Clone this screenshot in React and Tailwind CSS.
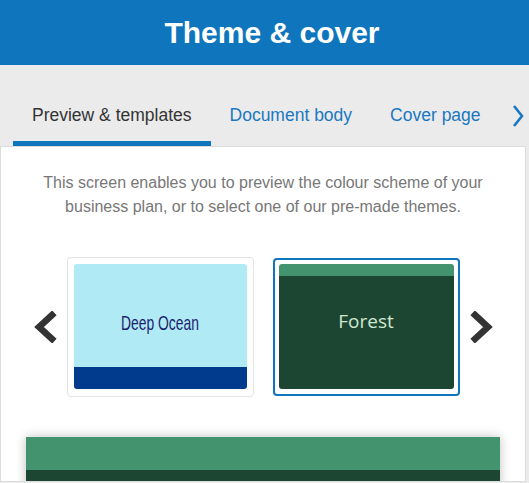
import React from "react";

const FONT = { fontFamily: '"Liberation Sans", Arial, sans-serif' };

function Chevron({ dir = "left", className = "" }) {
  const points = dir === "left" ? "18,4 5,16 18,28" : "5,4 18,16 5,28";
  return (
    <svg width="23" height="32" viewBox="0 0 23 32" className={className}>
      <polyline
        points={points}
        fill="none"
        stroke="#333333"
        strokeWidth="6.5"
        strokeLinecap="square"
        strokeLinejoin="miter"
      />
    </svg>
  );
}

const tabs = [
  { id: "preview", label: "Preview & templates", active: true },
  { id: "body", label: "Document body" },
  { id: "cover", label: "Cover page" },
];

export default function App() {
  return (
    <div className="w-[529px] h-[483px] overflow-hidden bg-[#ebebeb]" style={FONT}>
      <header className="h-[65px] bg-[#0f76bd] flex items-center justify-center pl-[15px]">
        <h1 className="text-[30px] font-bold text-white leading-none">Theme &amp; cover</h1>
      </header>

      <nav className="h-[81px] flex items-end pl-[13px] pr-[5px]">
        {tabs.map((tab) => (
          <div
            key={tab.id}
            className={
              tab.active
                ? "h-[50px] px-[19px] flex items-start pt-[6px] text-[17.5px] text-[#333] border-b-[5px] border-[#0f76bd]"
                : "h-[50px] px-[19px] flex items-start pt-[6px] text-[17.5px] text-[#1a78c2]"
            }
          >
            {tab.label}
          </div>
        ))}
        <div className="h-[50px] ml-auto flex items-start pt-[8px]">
          <svg width="12" height="24" viewBox="0 0 12 24">
            <polyline points="2,2 10,12 2,22" fill="none" stroke="#1a78c2" strokeWidth="2.6" />
          </svg>
        </div>
      </nav>

      <main className="w-[526px] h-[336px] bg-white border border-[#dcdcdc] overflow-hidden">
        <p className="pt-[24px] px-[30px] text-center text-[16px] leading-[24px] text-[#777]">
          This screen enables you to preview the colour scheme of your business plan, or to select one of our pre-made themes.
        </p>

        <div className="mt-[38px] flex items-center justify-center gap-[10px]">
          <Chevron dir="left" />
          <div className="flex items-center gap-[19px]">
            <div className="w-[187px] h-[140px] rounded-[4px] border border-[#e3e3e3] pt-[6px] px-[6px]">
              <div className="h-[125px] rounded-[3px] overflow-hidden flex flex-col">
                <div className="flex-1 bg-[#b0eaf5] flex items-center justify-center">
                  <span className="inline-block text-[21px] text-[#1b1f6e] pt-[15px] scale-x-[0.66]">
                    Deep Ocean
                  </span>
                </div>
                <div className="h-[22px] bg-[#003b8e]" />
              </div>
            </div>
            <div className="w-[187px] h-[138px] rounded-[4px] border-2 border-[#0f76bd] pt-[4px] px-[4px]">
              <div className="h-[125px] rounded-[3px] overflow-hidden flex flex-col">
                <div className="h-[12px] bg-[#43946e]" />
                <div className="flex-1 bg-[#1c4532] flex items-center justify-center pb-[22px]">
                  <span
                    className="text-[19px] text-[#cfe8cf] font-medium"
                    style={{ fontFamily: '"Open Sans", sans-serif' }}
                  >
                    Forest
                  </span>
                </div>
              </div>
            </div>
          </div>
          <Chevron dir="right" />
        </div>

        <div className="mt-[40px] ml-[25px] w-[474px] h-[60px] shadow-[0_0_10px_rgba(0,0,0,0.25)] flex flex-col">
          <div className="h-[33px] bg-[#43946e]" />
          <div className="flex-1 bg-[#1c4532]" />
        </div>
      </main>
    </div>
  );
}
